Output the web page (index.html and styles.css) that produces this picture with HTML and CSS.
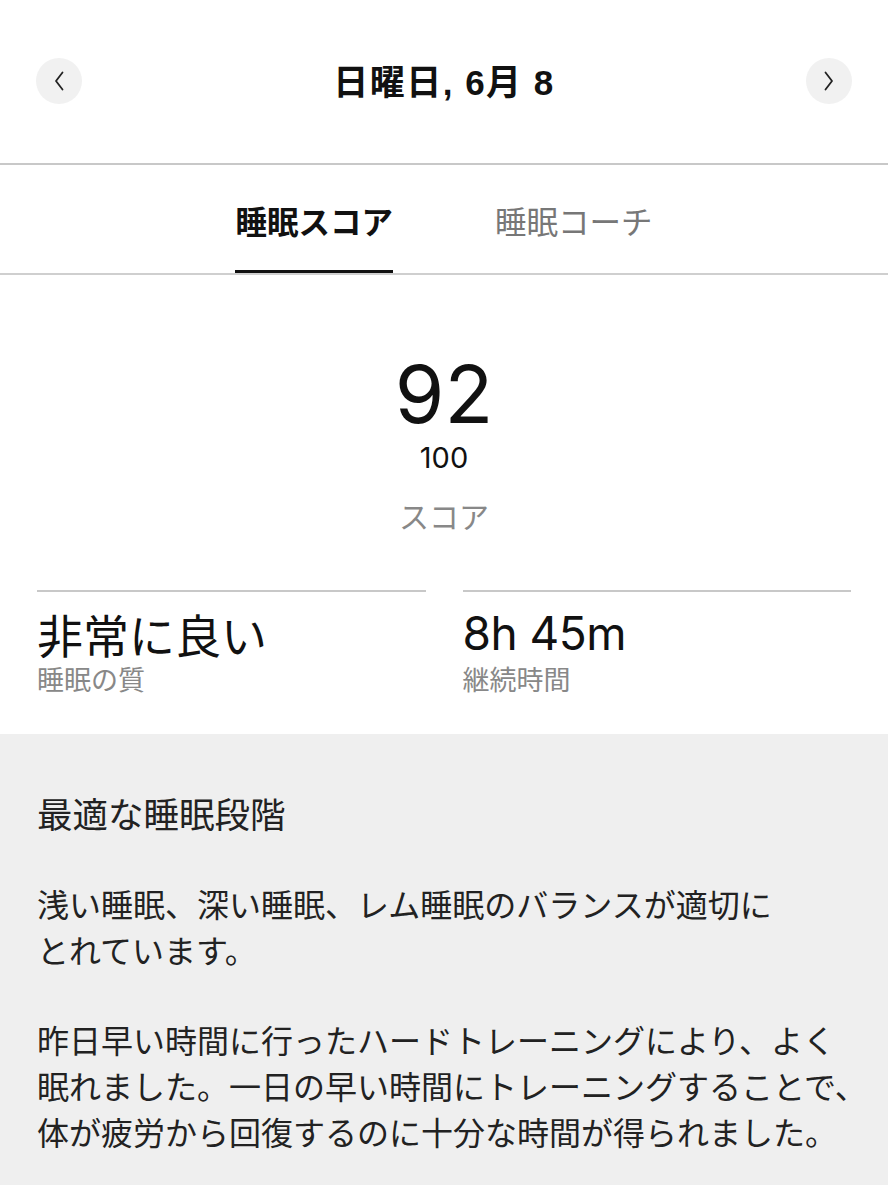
FILE: index.html
```html
<!DOCTYPE html>
<html lang="ja">
<head>
<meta charset="UTF-8">
<title>睡眠スコア</title>
<link rel="stylesheet" href="styles.css">
</head>
<body>
<div class="header">
	<div class="header-row">
		<button type="button" class="nav-btn">
			<svg width="12" height="22" viewBox="0 0 12 22"><path d="M9.5 2.5 L3 11 L9.5 19.5" fill="none" stroke="#222" stroke-width="1.8" stroke-linecap="round" stroke-linejoin="round"/></svg>
		</button>
		<div class="date">日曜日, 6月 8</div>
		<button type="button" class="nav-btn">
			<svg width="12" height="22" viewBox="0 0 12 22"><path d="M2.5 2.5 L9 11 L2.5 19.5" fill="none" stroke="#222" stroke-width="1.8" stroke-linecap="round" stroke-linejoin="round"/></svg>
		</button>
	</div>
</div>

<div class="tabs">
	<div class="tab active">睡眠スコア</div>
	<div class="tab">睡眠コーチ</div>
</div>

<div class="score">
	<div class="score-num">92</div>
	<div class="score-max">100</div>
	<div class="score-label">スコア</div>
</div>

<div class="stats">
	<div class="stat">
		<div class="stat-value">非常に良い</div>
		<div class="stat-label">睡眠の質</div>
	</div>
	<div class="stat">
		<div class="stat-value latin">8h 45m</div>
		<div class="stat-label">継続時間</div>
	</div>
</div>

<div class="detail">
	<h2 class="detail-title">最適な睡眠段階</h2>
	<p class="detail-text">浅い睡眠、深い睡眠、レム睡眠のバランスが適切に<br>とれています。</p>
	<p class="detail-text">昨日早い時間に行ったハードトレーニングにより、よく<br>眠れました。一日の早い時間にトレーニングすることで、<br>体が疲労から回復するのに十分な時間が得られました。</p>
</div>
</body>
</html>
```

FILE: styles.css
```css
* {margin:0; padding:0; box-sizing:border-box;}
body {background:#fff; color:#222; font-family:"Inter", "Noto Sans CJK JP", sans-serif; width:888px;}

.header {height:165px; padding-top:58px; border-bottom:2px solid #c8c8c8;}
.header-row {display:flex; align-items:center; justify-content:space-between; padding:0 36px; height:46px;}
.nav-btn {width:46px; height:46px; border-radius:50%; border:none; background:#f1f1f1; display:flex; align-items:center; justify-content:center;}
.date {font-family:"Liberation Sans", "Noto Sans CJK JP", sans-serif; font-size:35px; letter-spacing:1.5px; font-weight:bold; color:#111; line-height:46px; padding-top:4px;}

.tabs {display:flex; justify-content:center; gap:102px; border-bottom:2px solid #cfcfcf;}
.tab {font-family:"Noto Sans CJK JP", sans-serif; font-size:31.5px; line-height:40px; padding:35px 0 30px; color:#777; border-bottom:3px solid transparent;}
.tab.active {color:#111; font-weight:bold; border-bottom-color:#111;}

.score {display:flex; flex-direction:column; align-items:center; padding-top:79px;}
.score-num {font-size:80px; line-height:80px; color:#111;}
.score-max {font-size:29px; line-height:29px; margin-top:9px; color:#111;}
.score-label {font-family:"Noto Sans CJK JP", sans-serif; font-size:30px; line-height:40px; margin-top:23px; color:#888;}

.stats {display:grid; grid-template-columns:1fr 1fr; gap:37px; padding:55px 37px 38px;}
.stat {border-top:2px solid #c8c8c8; padding-top:16px;}
.stat-value {font-family:"Noto Sans CJK JP", sans-serif; font-size:46px; line-height:50px; color:#111;}
.stat-value.latin {font-family:"Inter", sans-serif; font-size:46px; letter-spacing:-0.5px;}
.stat-label {font-family:"Noto Sans CJK JP", sans-serif; font-size:27px; line-height:34px; margin-top:4px; color:#888;}

.detail {background:#efefef; padding:57px 20px 31px 37px; font-family:"Noto Sans CJK JP", sans-serif;}
.detail-title {font-size:35.5px; line-height:44px; font-weight:normal; color:#222;}
.detail-text {font-size:32px; line-height:46px; margin-top:44px; color:#222; white-space:nowrap;}
.detail-title + .detail-text {margin-top:45px;}
```
